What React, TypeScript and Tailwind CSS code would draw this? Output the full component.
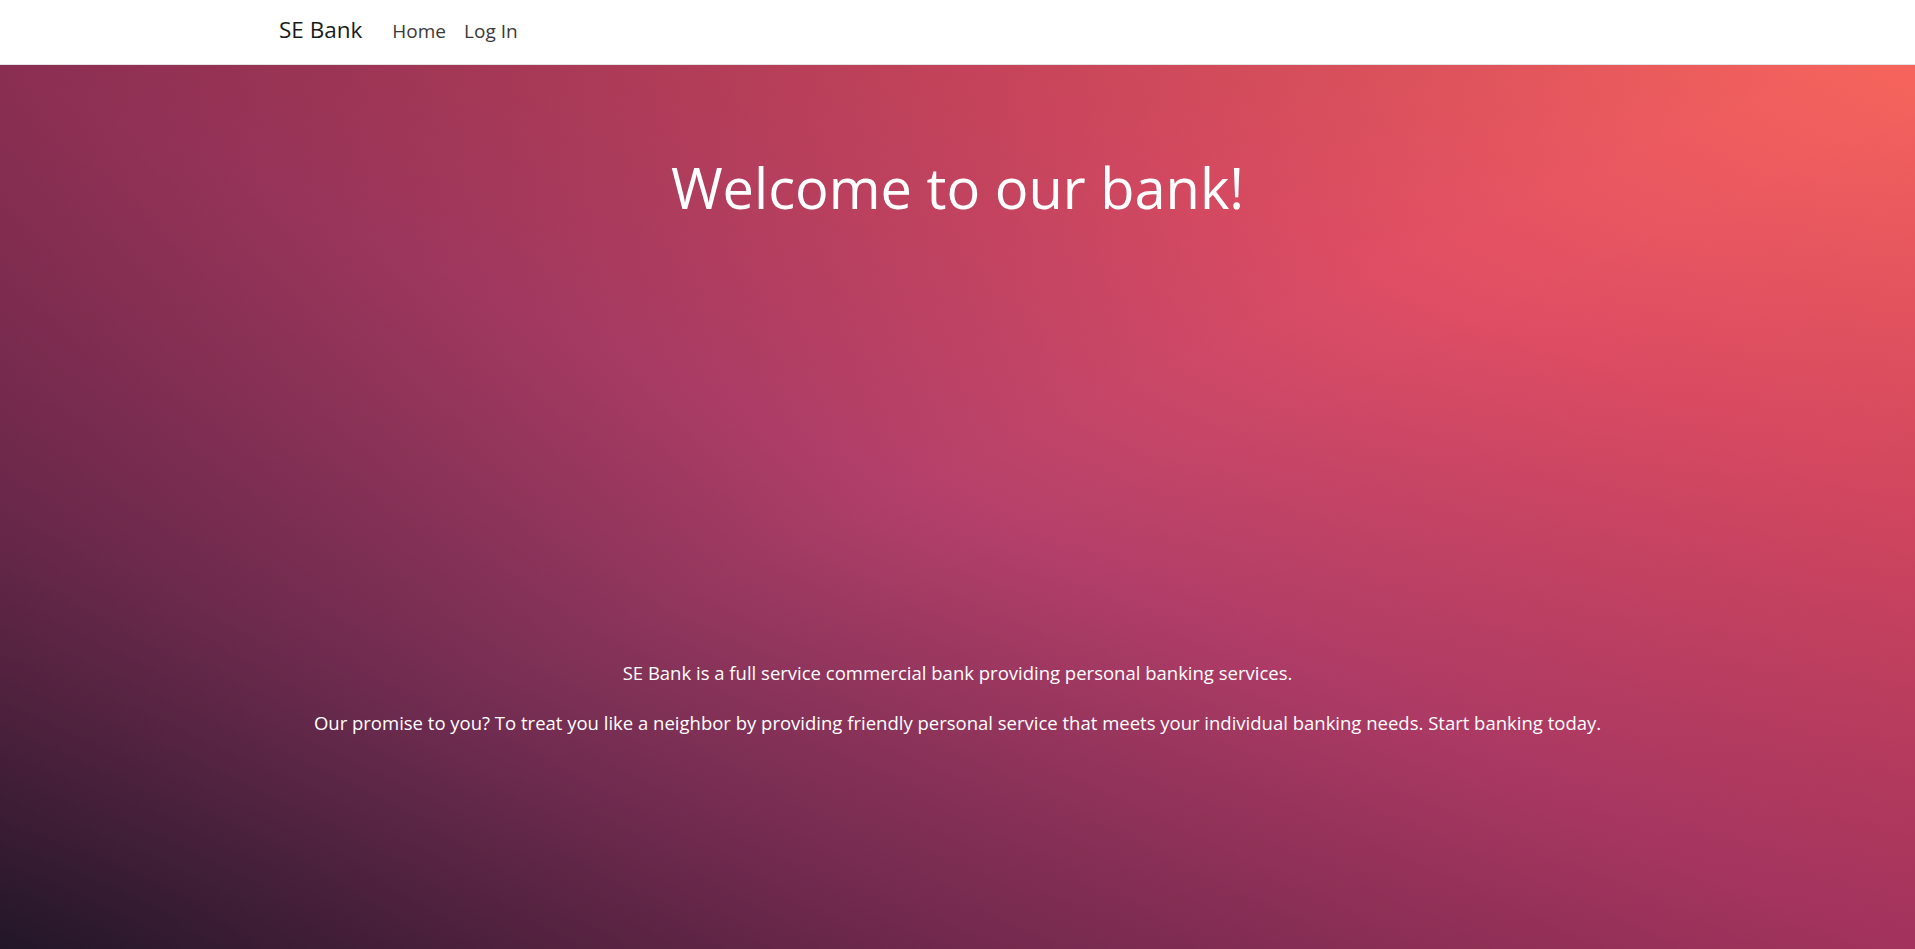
import React from "react";

export default function App() {
  return (
    <div className="flex min-h-screen flex-col font-['Open_Sans','Noto_Sans',sans-serif]">
      <nav className="flex h-[65px] items-center border-b border-[#e3e3e3] bg-white">
        <div className="mb-[5px] flex items-baseline pl-[279px]">
          <a href="#" className="mr-[30px] text-[22.5px] text-[#1a1a1a]">
            SE Bank
          </a>
          <a href="#" className="text-[19px] text-[#3a3a3a]">
            Home
          </a>
          <a href="#" className="ml-[18px] text-[19px] text-[#3a3a3a]">
            Log In
          </a>
        </div>
      </nav>

      {/* hero: two crossed diagonal gradients */}
      <main className="flex-1 bg-[linear-gradient(to_bottom_right,rgba(75,20,45,0.4)_0%,rgba(75,20,45,0)_48%,rgba(120,20,60,0)_52%,rgba(120,20,60,0.3)_100%),linear-gradient(to_top_right,#221628_0%,#702c50_25%,#b4406a_50%,#e04e64_75%,#f6645c_100%)] text-white">
        <h1 className="mt-[89px] text-center text-[56px] leading-[1.2] font-normal">
          Welcome to our bank!
        </h1>

        <div className="mt-[437px] flex flex-col gap-[20px] text-center text-[18.5px] leading-[30px]">
          <p>SE Bank is a full service commercial bank providing personal banking services.</p>
          <p>
            Our promise to you? To treat you like a neighbor by providing friendly personal service
            that meets your individual banking needs. Start banking today.
          </p>
        </div>
      </main>
    </div>
  );
}
